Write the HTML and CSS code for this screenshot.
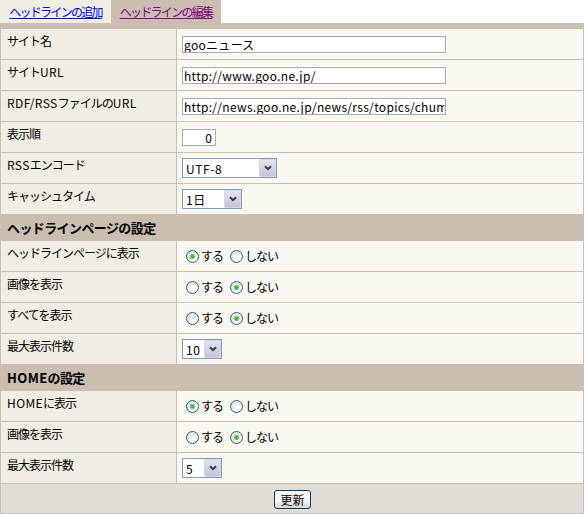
FILE: index.html
```html
<!DOCTYPE html>
<html lang="ja">
<head>
<meta charset="utf-8">
<title>ヘッドラインの編集</title>
<link rel="stylesheet" href="styles.css">
</head>
<body>
<div class="tabs">
  <a class="tab tab-add" href="#add">ヘッドラインの追加</a>
  <a class="tab tab-edit" href="#edit">ヘッドラインの編集</a>
</div>
<div class="band"></div>
<form class="editform">
<table class="form">
  <colgroup><col class="c1"><col class="c2"></colgroup>
  <tr class="row">
    <th class="label">サイト名</th>
    <td class="field"><input class="text wide" type="text" value="gooニュース"></td>
  </tr>
  <tr class="row">
    <th class="label">サイト<span class="lat">URL</span></th>
    <td class="field"><input class="text wide" type="text" value="http://www.goo.ne.jp/"></td>
  </tr>
  <tr class="row">
    <th class="label"><span class="lat">RDF/RSS</span>ファイルの<span class="lat">URL</span></th>
    <td class="field"><input class="text wide" type="text" value="http://news.goo.ne.jp/news/rss/topics/chumoku/index.rdf"></td>
  </tr>
  <tr class="row">
    <th class="label">表示順</th>
    <td class="field"><input class="text num" type="text" value="0"></td>
  </tr>
  <tr class="row">
    <th class="label"><span class="lat">RSS</span>エンコード</th>
    <td class="field"><span class="sel s-enc"><select><option>UTF-8</option><option>EUC-JP</option><option>Shift_JIS</option></select><span class="arrow"><svg width="8" height="6" viewBox="0 0 8 6"><polyline points="1,1.2 4,4.2 7,1.2" fill="none" stroke="#3c3c3c" stroke-width="2"/></svg></span></span></td>
  </tr>
  <tr class="row">
    <th class="label">キャッシュタイム</th>
    <td class="field"><span class="sel s-cache"><select><option>1日</option><option>2日</option></select><span class="arrow"><svg width="8" height="6" viewBox="0 0 8 6"><polyline points="1,1.2 4,4.2 7,1.2" fill="none" stroke="#3c3c3c" stroke-width="2"/></svg></span></span></td>
  </tr>
  <tr class="head">
    <th class="section" colspan="2">ヘッドラインページの設定</th>
  </tr>
  <tr class="row">
    <th class="label">ヘッドラインページに表示</th>
    <td class="field"><label class="opt"><input type="radio" name="hp" checked>する</label><label class="opt"><input type="radio" name="hp">しない</label></td>
  </tr>
  <tr class="row">
    <th class="label">画像を表示</th>
    <td class="field"><label class="opt"><input type="radio" name="hi">する</label><label class="opt"><input type="radio" name="hi" checked>しない</label></td>
  </tr>
  <tr class="row">
    <th class="label">すべてを表示</th>
    <td class="field"><label class="opt"><input type="radio" name="ha">する</label><label class="opt"><input type="radio" name="ha" checked>しない</label></td>
  </tr>
  <tr class="row">
    <th class="label">最大表示件数</th>
    <td class="field"><span class="sel s-num"><select><option>10</option><option>5</option></select><span class="arrow"><svg width="8" height="6" viewBox="0 0 8 6"><polyline points="1,1.2 4,4.2 7,1.2" fill="none" stroke="#3c3c3c" stroke-width="2"/></svg></span></span></td>
  </tr>
  <tr class="head">
    <th class="section" colspan="2"><span class="lat">HOME</span>の設定</th>
  </tr>
  <tr class="row">
    <th class="label"><span class="lat">HOME</span>に表示</th>
    <td class="field"><label class="opt"><input type="radio" name="mh" checked>する</label><label class="opt"><input type="radio" name="mh">しない</label></td>
  </tr>
  <tr class="row">
    <th class="label">画像を表示</th>
    <td class="field"><label class="opt"><input type="radio" name="mi">する</label><label class="opt"><input type="radio" name="mi" checked>しない</label></td>
  </tr>
  <tr class="row">
    <th class="label">最大表示件数</th>
    <td class="field"><span class="sel s-num"><select><option>5</option><option>10</option></select><span class="arrow"><svg width="8" height="6" viewBox="0 0 8 6"><polyline points="1,1.2 4,4.2 7,1.2" fill="none" stroke="#3c3c3c" stroke-width="2"/></svg></span></span></td>
  </tr>
  <tr class="foot">
    <td class="submitcell" colspan="2"><button class="submit" type="button">更新</button></td>
  </tr>
</table>
</form>
</body>
</html>
```
FILE: styles.css
```css
html, body {
  margin: 0;
  padding: 0;
  background: #fff;
}
body {
  font-family: "Noto Sans CJK JP", "Noto Sans", sans-serif;
  font-size: 12px;
  color: #000;
  letter-spacing: -1px;
}
.lat {
  letter-spacing: 0.4px;
}
.tabs {
  display: flex;
  height: 23px;
}
.tab {
  display: flex;
  align-items: center;
  justify-content: center;
  height: 23px;
  font-size: 12px;
  letter-spacing: -1.7px;
  line-height: 14px;
}
.tab-add {
  width: 111px;
  background: #f0ede2;
  color: #0000ff;
}
.tab-edit {
  width: 110px;
  background: #cbbeb0;
  color: #800080;
}
.band {
  height: 5px;
  width: 584px;
  background: #cbbeb0;
}
.editform {
  margin: 0;
}
.form {
  width: 584px;
  border-collapse: separate;
  border-spacing: 1px;
  background: #cbbeb0;
  table-layout: fixed;
}
.c1 { width: 175px; }
.c2 { width: 406px; }
.row { height: 30px; }
.head { height: 25px; }
.foot { height: 29px; }
.label {
  background: #f0ede2;
  text-align: left;
  font-weight: normal;
  vertical-align: top;
  padding: 5px 4px 0 6px;
  line-height: 14px;
  white-space: nowrap;
}
.field {
  background: #f8f7f0;
  vertical-align: middle;
  padding: 0 0 0 5px;
  line-height: 14px;
}
.section {
  background: #cbbeb0;
  text-align: left;
  font-size: 13px;
  font-weight: bold;
  letter-spacing: -0.6px;
  padding: 0 0 0 6px;
  vertical-align: middle;
}
.text {
  box-sizing: border-box;
  height: 17px;
  border: 1px solid #a5acb2;
  background: #fff;
  font-family: "Noto Sans CJK JP", "Noto Sans", sans-serif;
  font-size: 12px;
  letter-spacing: 0;
  padding: 0 1px;
  margin: 0;
  vertical-align: middle;
  outline: none;
  color: #000;
}
.wide {
  width: 264px;
  letter-spacing: 0.3px;
}
.num {
  width: 34px;
  text-align: right;
  padding-right: 3px;
}
.sel {
  position: relative;
  display: inline-block;
  vertical-align: middle;
  height: 20px;
}
.sel select {
  appearance: none;
  -webkit-appearance: none;
  box-sizing: border-box;
  height: 20px;
  border: 1px solid #7f9db9;
  border-radius: 0;
  background: #fff;
  font-family: "Noto Sans CJK JP", "Noto Sans", sans-serif;
  font-size: 12px;
  letter-spacing: 0.6px;
  padding: 0 0 0 3px;
  margin: 0;
  color: #000;
  outline: none;
}
.s-enc select { width: 95px; }
.s-cache select { width: 60px; }
.s-num select { width: 40px; }
.arrow {
  position: absolute;
  right: 1px;
  top: 1px;
  width: 15px;
  height: 16px;
  border: 1px solid #d6d6e6;
  border-radius: 1px;
  background: linear-gradient(#e2e2f0, #c3c3dc);
  display: flex;
  align-items: center;
  justify-content: center;
  pointer-events: none;
}
.opt {
  display: inline-flex;
  align-items: center;
  margin-right: 3px;
  padding-top: 2px;
}
.opt input {
  appearance: none;
  -webkit-appearance: none;
  width: 13px;
  height: 13px;
  box-sizing: border-box;
  border: 1px solid #2e5e8c;
  border-radius: 50%;
  margin: 0 2px 0 4px;
  background: radial-gradient(circle at 65% 65%, #ffffff 0, #f2f2ec 40%, #d4d4cc 100%);
}
.opt input:checked {
  background:
    radial-gradient(circle, #2fa82f 0, #4fc44f 1.5px, #7fd27f 2.5px, rgba(255,255,255,0) 3px),
    radial-gradient(circle at 65% 65%, #ffffff 0, #f2f2ec 40%, #d4d4cc 100%);
}
.submitcell {
  background: #e0ddd5;
  text-align: center;
  vertical-align: middle;
  padding: 0;
}
.submit {
  box-sizing: border-box;
  width: 37px;
  height: 19px;
  border: 1px solid #003c74;
  border-radius: 3px;
  background: linear-gradient(#ffffff, #f4f3ee 60%, #d9d6cb);
  font-family: "Noto Sans CJK JP", "Noto Sans", sans-serif;
  font-size: 12px;
  letter-spacing: 0;
  padding: 0;
  margin: 0 0 0 1px;
  color: #000;
  line-height: 15px;
  vertical-align: middle;
}
```
